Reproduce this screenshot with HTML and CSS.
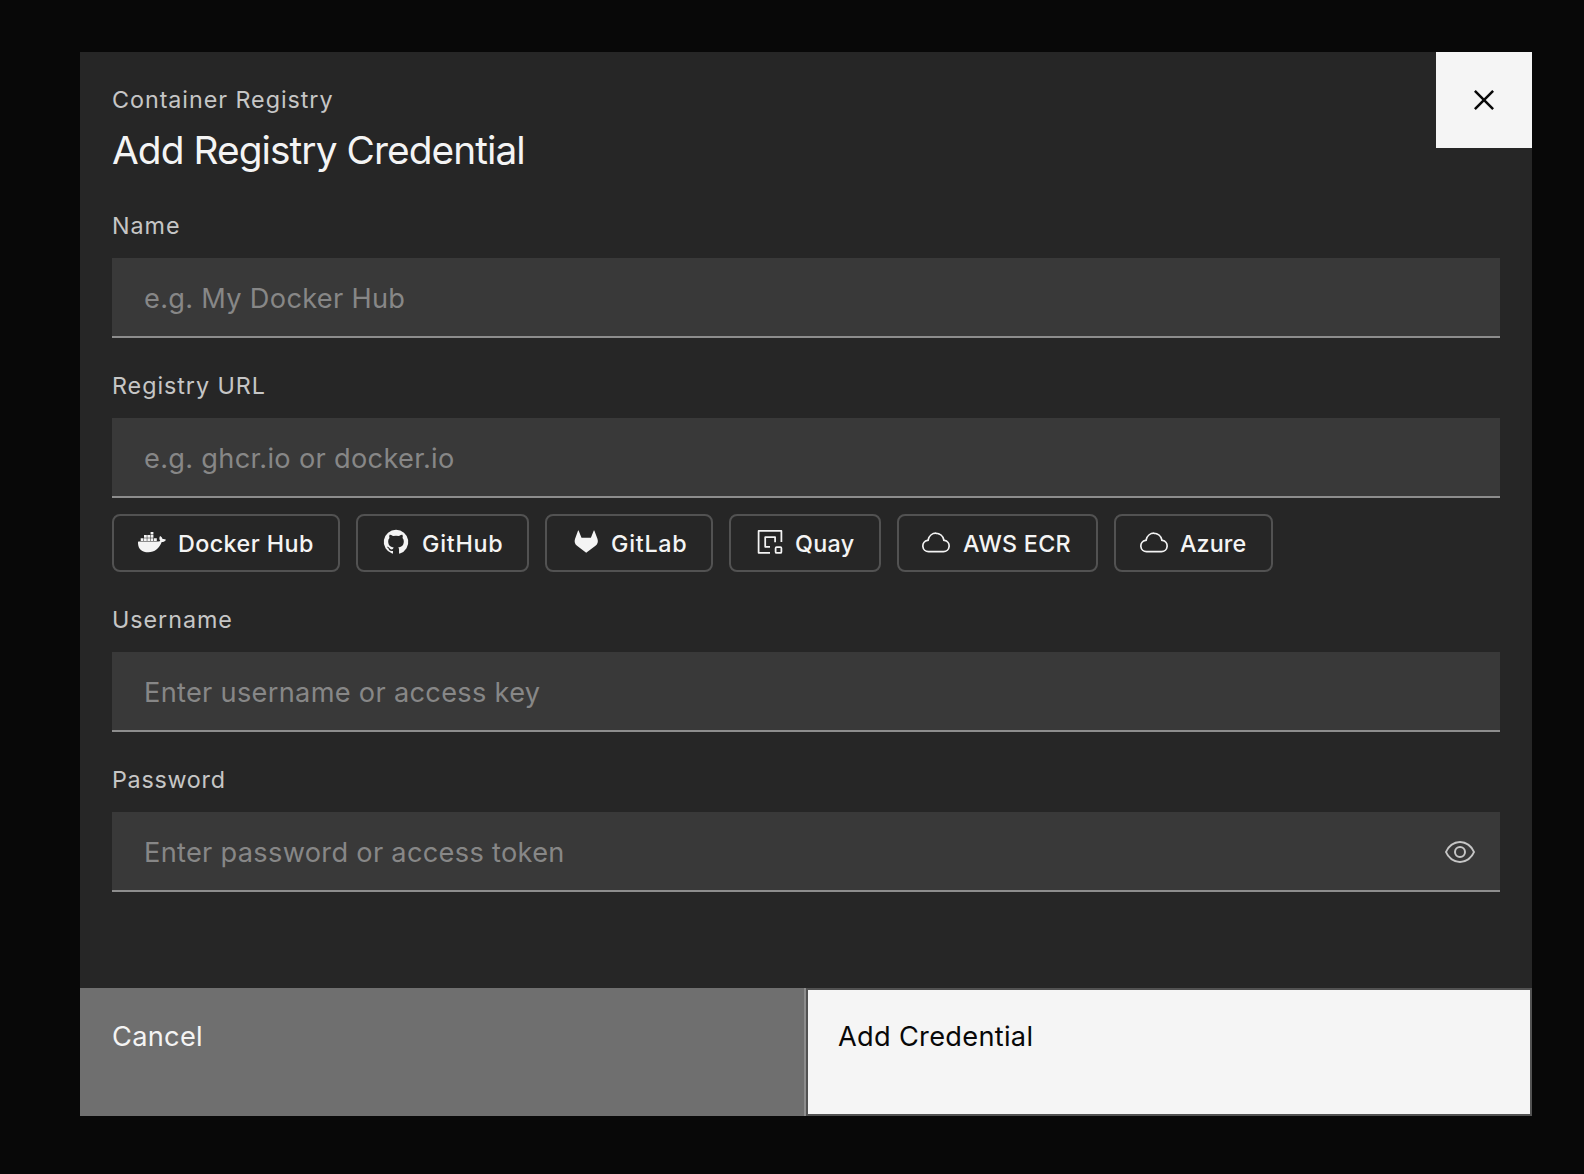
FILE: index.html
```html
<!DOCTYPE html>
<html lang="en">

<head>
	<meta charset="UTF-8">
	<meta name="viewport" content="width=device-width, initial-scale=1.0">
	<title>Add Registry Credential</title>
	<link rel="stylesheet" href="styles.css">
</head>

<body>
	<div class="overlay">
		<form class="modal">
			<button type="button" class="close" aria-label="Close">
				<svg viewBox="0 0 32 32"><path d="M17.4141 16L24 9.4141 22.5859 8 16 14.5859 9.4143 8 8 9.4141 14.5859 16 8 22.5859 9.4143 24 16 17.4141 22.5859 24 24 22.5859z"/></svg>
			</button>

			<div class="content">
				<header>
					<p class="label">Container Registry</p>
					<h1>Add Registry Credential</h1>
				</header>

				<div class="field">
					<label class="label" for="name">Name</label>
					<input type="text" id="name" placeholder="e.g. My Docker Hub">
				</div>

				<div class="field">
					<label class="label" for="url">Registry URL</label>
					<input type="text" id="url" placeholder="e.g. ghcr.io or docker.io">
					<div class="presets">
						<button type="button" class="preset docker">
							<svg viewBox="0 0 28 28">
								<path d="M.6 13.6h19.6c1 0 1.7-.2 2.1-.5-1.3-1.7-1.1-3.8-.2-5.1 1.6.8 2.3 1.9 2.4 3.1 1.3-.2 2.6 0 3.5.6-.8 1.7-2.4 2.4-4.3 2.4-2.4 6.4-7 10.2-13.4 10.2C3.8 24.3-.2 20.8 0 14.2c0-.4.2-.6.6-.6z"/>
								<path d="M2.7 10.3h2.8V13H2.7zM6 10.3h2.8V13H6zM9.3 10.3h2.8V13H9.3zM12.6 10.3h2.8V13h-2.8zM16 10.3h2.8V13H16zM6 7.1h2.8v2.7H6zM9.3 7.1h2.8v2.7H9.3zM12.6 7.1h2.8v2.7h-2.8zM12.6 4h2.8v2.6h-2.8z"/>
							</svg>
							Docker Hub
						</button>
						<button type="button" class="preset github">
							<svg viewBox="0 0 32 32"><path d="M16,2a14,14,0,0,0-4.43,27.28c.7.13,1-.3,1-.67s0-1.21,0-2.38c-3.89.84-4.71-1.88-4.71-1.88A3.71,3.71,0,0,0,6.24,22.3c-1.27-.86.1-.85.1-.85A2.94,2.94,0,0,1,8.48,22.9a3,3,0,0,0,4.08,1.16,2.93,2.93,0,0,1,.88-1.87c-3.1-.36-6.37-1.56-6.37-6.92a5.4,5.4,0,0,1,1.44-3.76,5,5,0,0,1,.14-3.7s1.17-.38,3.85,1.43a13.3,13.3,0,0,1,7,0c2.67-1.81,3.84-1.43,3.84-1.43a5,5,0,0,1,.14,3.7,5.4,5.4,0,0,1,1.44,3.76c0,5.38-3.27,6.56-6.39,6.91a3.33,3.33,0,0,1,.95,2.59c0,1.87,0,3.38,0,3.84s.25.81,1,.67A14,14,0,0,0,16,2Z"/></svg>
							GitHub
						</button>
						<button type="button" class="preset gitlab">
							<svg viewBox="0 0 28 28"><path d="M7.8 2.9l2.7 6.8h9.4l2.7-6.8c.2-.4.7-.4.9 0l3 8c.9 2.5.1 5.2-2 6.8l-9.3 7L6 17.7c-2.1-1.6-2.9-4.3-2-6.8l2.9-8c.2-.4.7-.4.9 0z"/></svg>
							GitLab
						</button>
						<button type="button" class="preset quay">
							<svg viewBox="0 0 28 28">
								<path class="line" d="M15 24.8H3.6V2.9h22.8v11.1"/>
								<path class="line" d="M15 18.8h-4.8V9.2h9.9v5"/>
								<rect class="line" x="20.6" y="19.2" width="5.8" height="5.7" rx="1"/>
							</svg>
							Quay
						</button>
						<button type="button" class="preset aws">
							<svg viewBox="0 0 32 32"><path d="M16,7h0a7.66,7.66,0,0,1,1.51.15,8,8,0,0,1,6.35,6.34l.26,1.35,1.35.24a5.5,5.5,0,0,1-1,10.92H7.5a5.5,5.5,0,0,1-1-10.92l1.34-.24.26-1.35A8,8,0,0,1,16,7m0-2a10,10,0,0,0-9.83,8.12A7.5,7.5,0,0,0,7.49,28h17a7.5,7.5,0,0,0,1.32-14.88A10,10,0,0,0,16,5Z"/></svg>
							AWS ECR
						</button>
						<button type="button" class="preset azure">
							<svg viewBox="0 0 32 32"><path d="M16,7h0a7.66,7.66,0,0,1,1.51.15,8,8,0,0,1,6.35,6.34l.26,1.35,1.35.24a5.5,5.5,0,0,1-1,10.92H7.5a5.5,5.5,0,0,1-1-10.92l1.34-.24.26-1.35A8,8,0,0,1,16,7m0-2a10,10,0,0,0-9.83,8.12A7.5,7.5,0,0,0,7.49,28h17a7.5,7.5,0,0,0,1.32-14.88A10,10,0,0,0,16,5Z"/></svg>
							Azure
						</button>
					</div>
				</div>

				<div class="field">
					<label class="label" for="username">Username</label>
					<input type="text" id="username" placeholder="Enter username or access key">
				</div>

				<div class="field">
					<label class="label tight" for="password">Password</label>
					<div class="password">
						<input type="password" id="password" placeholder="Enter password or access token">
						<button type="button" class="show" aria-label="Show password">
							<svg viewBox="0 0 32 32"><path d="M30.94,15.66A16.69,16.69,0,0,0,16,5,16.69,16.69,0,0,0,1.06,15.66a1,1,0,0,0,0,.68A16.69,16.69,0,0,0,16,27,16.69,16.69,0,0,0,30.94,16.34,1,1,0,0,0,30.94,15.66ZM16,25c-5.3,0-10.9-3.93-12.93-9C5.1,10.93,10.7,7,16,7s10.9,3.93,12.93,9C26.9,21.07,21.3,25,16,25Z"/><path d="M16,10a6,6,0,1,0,6,6A6,6,0,0,0,16,10Zm0,10a4,4,0,1,1,4-4A4,4,0,0,1,16,20Z"/></svg>
						</button>
					</div>
				</div>
			</div>

			<footer>
				<button type="button" class="cancel">Cancel</button>
				<button type="submit" class="submit">Add Credential</button>
			</footer>
		</form>
	</div>

	<script>
		// show / hide the password
		var password = document.getElementById('password');
		document.querySelector('.show').onclick = function () {
			password.type = password.type == 'password' ? 'text' : 'password';
		}
		document.querySelector('form').onsubmit = function (e) {
			e.preventDefault();
		}
	</script>
</body>

</html>
```
FILE: styles.css
```css
* {
	margin: 0;
	padding: 0;
	box-sizing: border-box;
}

body {
	background-color: #080808;
	color: #f4f4f4;
	font-family: Inter, "Liberation Sans", sans-serif;
}

button,
input {
	font-family: inherit;
	color: inherit;
	border: none;
	border-radius: 0;
	outline: none;
}

button {
	cursor: pointer;
}

svg {
	display: block;
	fill: currentColor;
}

.overlay {
	height: 100vh;
	padding: 52px 52px 58px 80px;
}

.modal {
	position: relative;
	display: flex;
	flex-direction: column;
	height: 100%;
	background-color: #262626;
}

/* close button sits over the top right corner */
.close {
	position: absolute;
	top: 0;
	right: 0;
	display: flex;
	align-items: center;
	justify-content: center;
	width: 96px;
	height: 96px;
	background-color: #f5f5f5;
	color: #080808;
}

.close svg {
	width: 40px;
	height: 40px;
}

.content {
	flex: 1;
	padding: 32px 32px 0;
}

header {
	margin-bottom: 34px;
}

.label {
	display: block;
	font-size: 23.3px;
	line-height: 32px;
	letter-spacing: 0.96px;
	color: #c6c6c6;
}

.tight {
	letter-spacing: 0.73px;
}

h1 {
	margin-top: 8px;
	font-size: 38.8px;
	font-weight: 400;
	line-height: 52px;
	letter-spacing: -0.92px;
}

.field {
	margin-bottom: 32px;
}

.field .label {
	margin-bottom: 16px;
}

input {
	display: block;
	width: 100%;
	height: 80px;
	padding: 2px 32px 0;
	background-color: #393939;
	border-bottom: 2px solid #8d8d8d;
	font-size: 27.2px;
	letter-spacing: 0.3px;
}

input::placeholder {
	color: #878787;
}

/* registry presets */
.presets {
	display: flex;
	gap: 16px;
	margin-top: 16px;
}

.preset {
	display: flex;
	align-items: center;
	gap: 12px;
	height: 58px;
	padding: 0 0 0 24px;
	background: transparent;
	border: 2px solid #525252;
	border-radius: 8px;
	font-size: 23.3px;
	font-weight: 500;
	white-space: nowrap;
}

.preset svg {
	width: 28px;
	height: 28px;
	margin-top: -2px;
}

.preset .line {
	fill: none;
	stroke: currentColor;
	stroke-width: 1.75;
	stroke-linejoin: round;
}

.docker {
	width: 228px;
	letter-spacing: 0.43px;
}

.github {
	width: 173px;
	letter-spacing: 0.74px;
}

.gitlab {
	width: 168px;
	letter-spacing: 0.74px;
}

.quay {
	width: 152px;
	letter-spacing: 0.3px;
}

.aws {
	width: 201px;
	gap: 13px;
	padding-left: 23px;
	letter-spacing: 0.3px;
}

.azure {
	width: 159px;
	letter-spacing: 0.1px;
}

.password {
	position: relative;
}

.show {
	position: absolute;
	top: 24px;
	right: 24px;
	background: transparent;
	color: #c6c6c6;
}

.show svg {
	width: 32px;
	height: 32px;
}

footer {
	display: flex;
	height: 128px;
}

footer button {
	display: flex;
	align-items: flex-start;
	width: 50%;
	padding: 31px 32px;
	font-size: 27.2px;
	line-height: 36px;
	letter-spacing: 0.3px;
}

.cancel {
	background-color: #6f6f6f;
	border-right: 2px solid #8d8d8d;
}

footer .submit {
	padding: 29px 30px;
	background-color: #f5f5f5;
	border: 2px solid #525252;
	color: #080808;
}
```
